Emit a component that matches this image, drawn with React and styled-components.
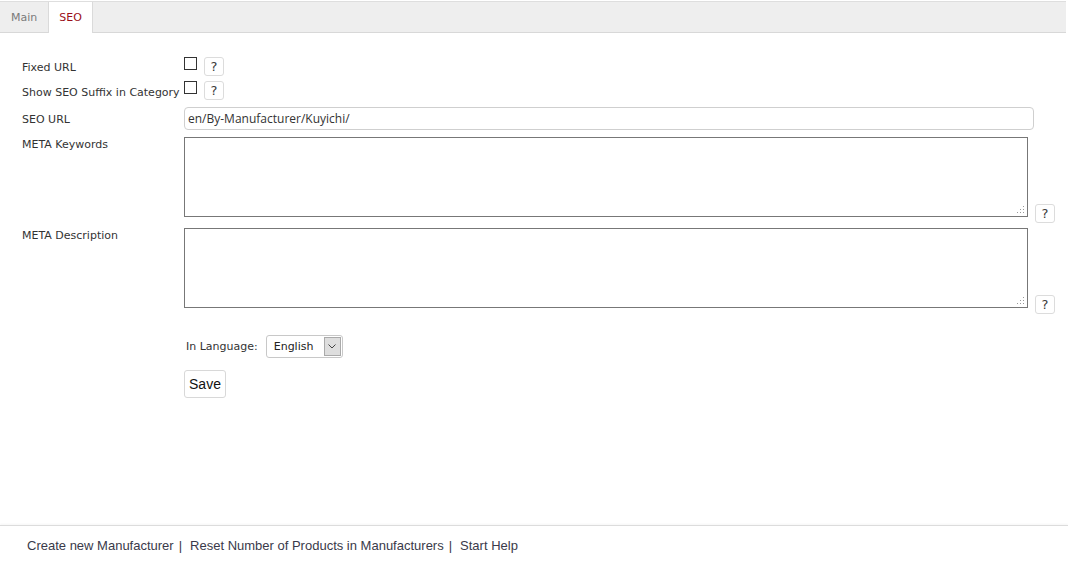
import React from 'react'
import styled, { createGlobalStyle } from 'styled-components'

const GlobalStyle = createGlobalStyle`
  html, body {
    margin: 0;
    padding: 0;
    background: #fff;
  }
  body {
    font-family: 'Liberation Sans', Arial, sans-serif;
    color: #333;
  }
`

const Page = styled.div`
  width: 1068px;
  height: 564px;
  display: flex;
  flex-direction: column;
  overflow: hidden;
`

const TabBar = styled.div`
  margin-top: 1px;
  width: 1066px;
  height: 30px;
  display: flex;
  background: #eeeeee;
  border-top: 1px solid #dedede;
  border-bottom: 1px solid #d8d8d8;
`

const Tab = styled.div`
  display: flex;
  align-items: center;
  padding: 0 ${p => (p.active ? '10px' : '11px')};
  height: ${p => (p.active ? '31px' : '30px')};
  background: ${p => (p.active ? '#fff' : 'transparent')};
  border-left: ${p => (p.active ? '1px solid #dadada' : 'none')};
  border-right: ${p => (p.active ? '1px solid #dadada' : 'none')};
  color: ${p => (p.active ? '#9b0f1a' : '#7a7a7a')};
  font-family: 'DejaVu Sans', Verdana, sans-serif;
  font-size: 11px;
`

const Form = styled.div`
  flex: 1;
  padding: 24px 0 0 22px;
  display: flex;
  flex-direction: column;
  font-family: 'DejaVu Sans', Verdana, sans-serif;
  font-size: 11px;
  color: #333;
`

const Row = styled.div`
  display: flex;
  align-items: flex-start;
  margin-bottom: ${p => p.gap || 0}px;
`

const Label = styled.div`
  width: 162px;
  padding-top: ${p => p.top || 0}px;
  white-space: nowrap;
`

const Field = styled.div`
  display: flex;
  align-items: ${p => p.align || 'flex-start'};
  gap: ${p => p.gap || 0}px;
`

const Check = styled.span`
  width: 11px;
  height: 11px;
  border: 1px solid #333;
  background: #fff;
  display: inline-block;
`

const Help = styled.span`
  width: 20px;
  height: 19px;
  border: 1px solid #dcdcdc;
  border-radius: 3px;
  background: #fff;
  display: inline-flex;
  align-items: center;
  justify-content: center;
  font-family: 'DejaVu Sans', Verdana, sans-serif;
  font-size: 13px;
  color: #3a3a3a;
  box-sizing: border-box;
  margin-bottom: ${p => p.drop || 0}px;
`

const TextInput = styled.div`
  width: 850px;
  height: 23px;
  box-sizing: border-box;
  border: 1px solid #cfcfcf;
  border-radius: 4px;
  padding: 0 3px;
  display: flex;
  align-items: center;
  font-family: 'Open Sans', sans-serif;
  font-size: 12px;
  color: #333;
`

const TextArea = styled.div`
  position: relative;
  width: 844px;
  height: 80px;
  box-sizing: border-box;
  border: 1px solid #777;
`

const Grip = styled.svg`
  position: absolute;
  right: 2px;
  bottom: 2px;
`

const LangRow = styled.div`
  margin: 27px 0 0 164px;
  display: flex;
  align-items: center;
  gap: 8px;
`

const Select = styled.div`
  width: 77px;
  height: 23px;
  box-sizing: border-box;
  border: 1px solid #c8c8c8;
  border-radius: 3px;
  display: flex;
  align-items: stretch;
  font-family: 'DejaVu Sans', Verdana, sans-serif;
  font-size: 11px;
  color: #222;
`

const SelectText = styled.span`
  flex: 1;
  display: flex;
  align-items: center;
  padding-left: 7px;
`

const SelectArrow = styled.span`
  width: 15px;
  margin: 1px;
  background: #dedede;
  border: 1px solid #aaa;
  display: flex;
  align-items: center;
  justify-content: center;
`

const SaveButton = styled.div`
  margin: 12px 0 0 162px;
  width: 42px;
  height: 28px;
  box-sizing: border-box;
  border: 1px solid #d8d8d8;
  border-radius: 3px;
  display: flex;
  align-items: center;
  justify-content: center;
  font-family: 'Liberation Sans', Arial, sans-serif;
  font-size: 14px;
  color: #111;
`

const Footer = styled.div`
  height: 38px;
  border-top: 1px solid #dcdcdc;
  box-shadow: 0 -1px 2px rgba(0, 0, 0, 0.04);
  display: flex;
  align-items: center;
  padding-left: 27px;
  font-family: 'Liberation Sans', Arial, sans-serif;
  font-size: 13px;
  color: #3a3a4a;
`

const Sep = styled.span`
  margin: 0 8px 0 5px;
`

const GripIcon = () => (
  <Grip width="8" height="8" viewBox="0 0 8 8">
    <g fill="#999">
      <rect x="6" y="0" width="1" height="1" />
      <rect x="3" y="3" width="1" height="1" />
      <rect x="6" y="3" width="1" height="1" />
      <rect x="0" y="6" width="1" height="1" />
      <rect x="3" y="6" width="1" height="1" />
      <rect x="6" y="6" width="1" height="1" />
    </g>
  </Grip>
)

const App = () => (
  <Page>
    <GlobalStyle />
    <TabBar>
      <Tab>Main</Tab>
      <Tab active>SEO</Tab>
    </TabBar>
    <Form>
      <Row gap={5}>
        <Label top={4}>Fixed URL</Label>
        <Field gap={7}>
          <Check />
          <Help>?</Help>
        </Field>
      </Row>
      <Row gap={7}>
        <Label top={5}>Show SEO Suffix in Category</Label>
        <Field gap={7}>
          <Check />
          <Help>?</Help>
        </Field>
      </Row>
      <Row gap={7}>
        <Label top={6}>SEO URL</Label>
        <TextInput>en/By-Manufacturer/Kuyichi/</TextInput>
      </Row>
      <Row gap={11}>
        <Label top={1}>META Keywords</Label>
        <Field align="flex-end" gap={7}>
          <TextArea><GripIcon /></TextArea>
          <Help drop={-6}>?</Help>
        </Field>
      </Row>
      <Row>
        <Label top={1}>META Description</Label>
        <Field align="flex-end" gap={7}>
          <TextArea><GripIcon /></TextArea>
          <Help drop={-6}>?</Help>
        </Field>
      </Row>
      <LangRow>
        <span>In Language:</span>
        <Select>
          <SelectText>English</SelectText>
          <SelectArrow>
            <svg width="8" height="5" viewBox="0 0 8 5">
              <path d="M0.5 0.5 L4 4 L7.5 0.5" fill="none" stroke="#444" strokeWidth="1" />
            </svg>
          </SelectArrow>
        </Select>
      </LangRow>
      <SaveButton>Save</SaveButton>
    </Form>
    <Footer>
      Create new Manufacturer<Sep>|</Sep>
      Reset Number of Products in Manufacturers<Sep>|</Sep>
      Start Help
    </Footer>
  </Page>
)

export default App
